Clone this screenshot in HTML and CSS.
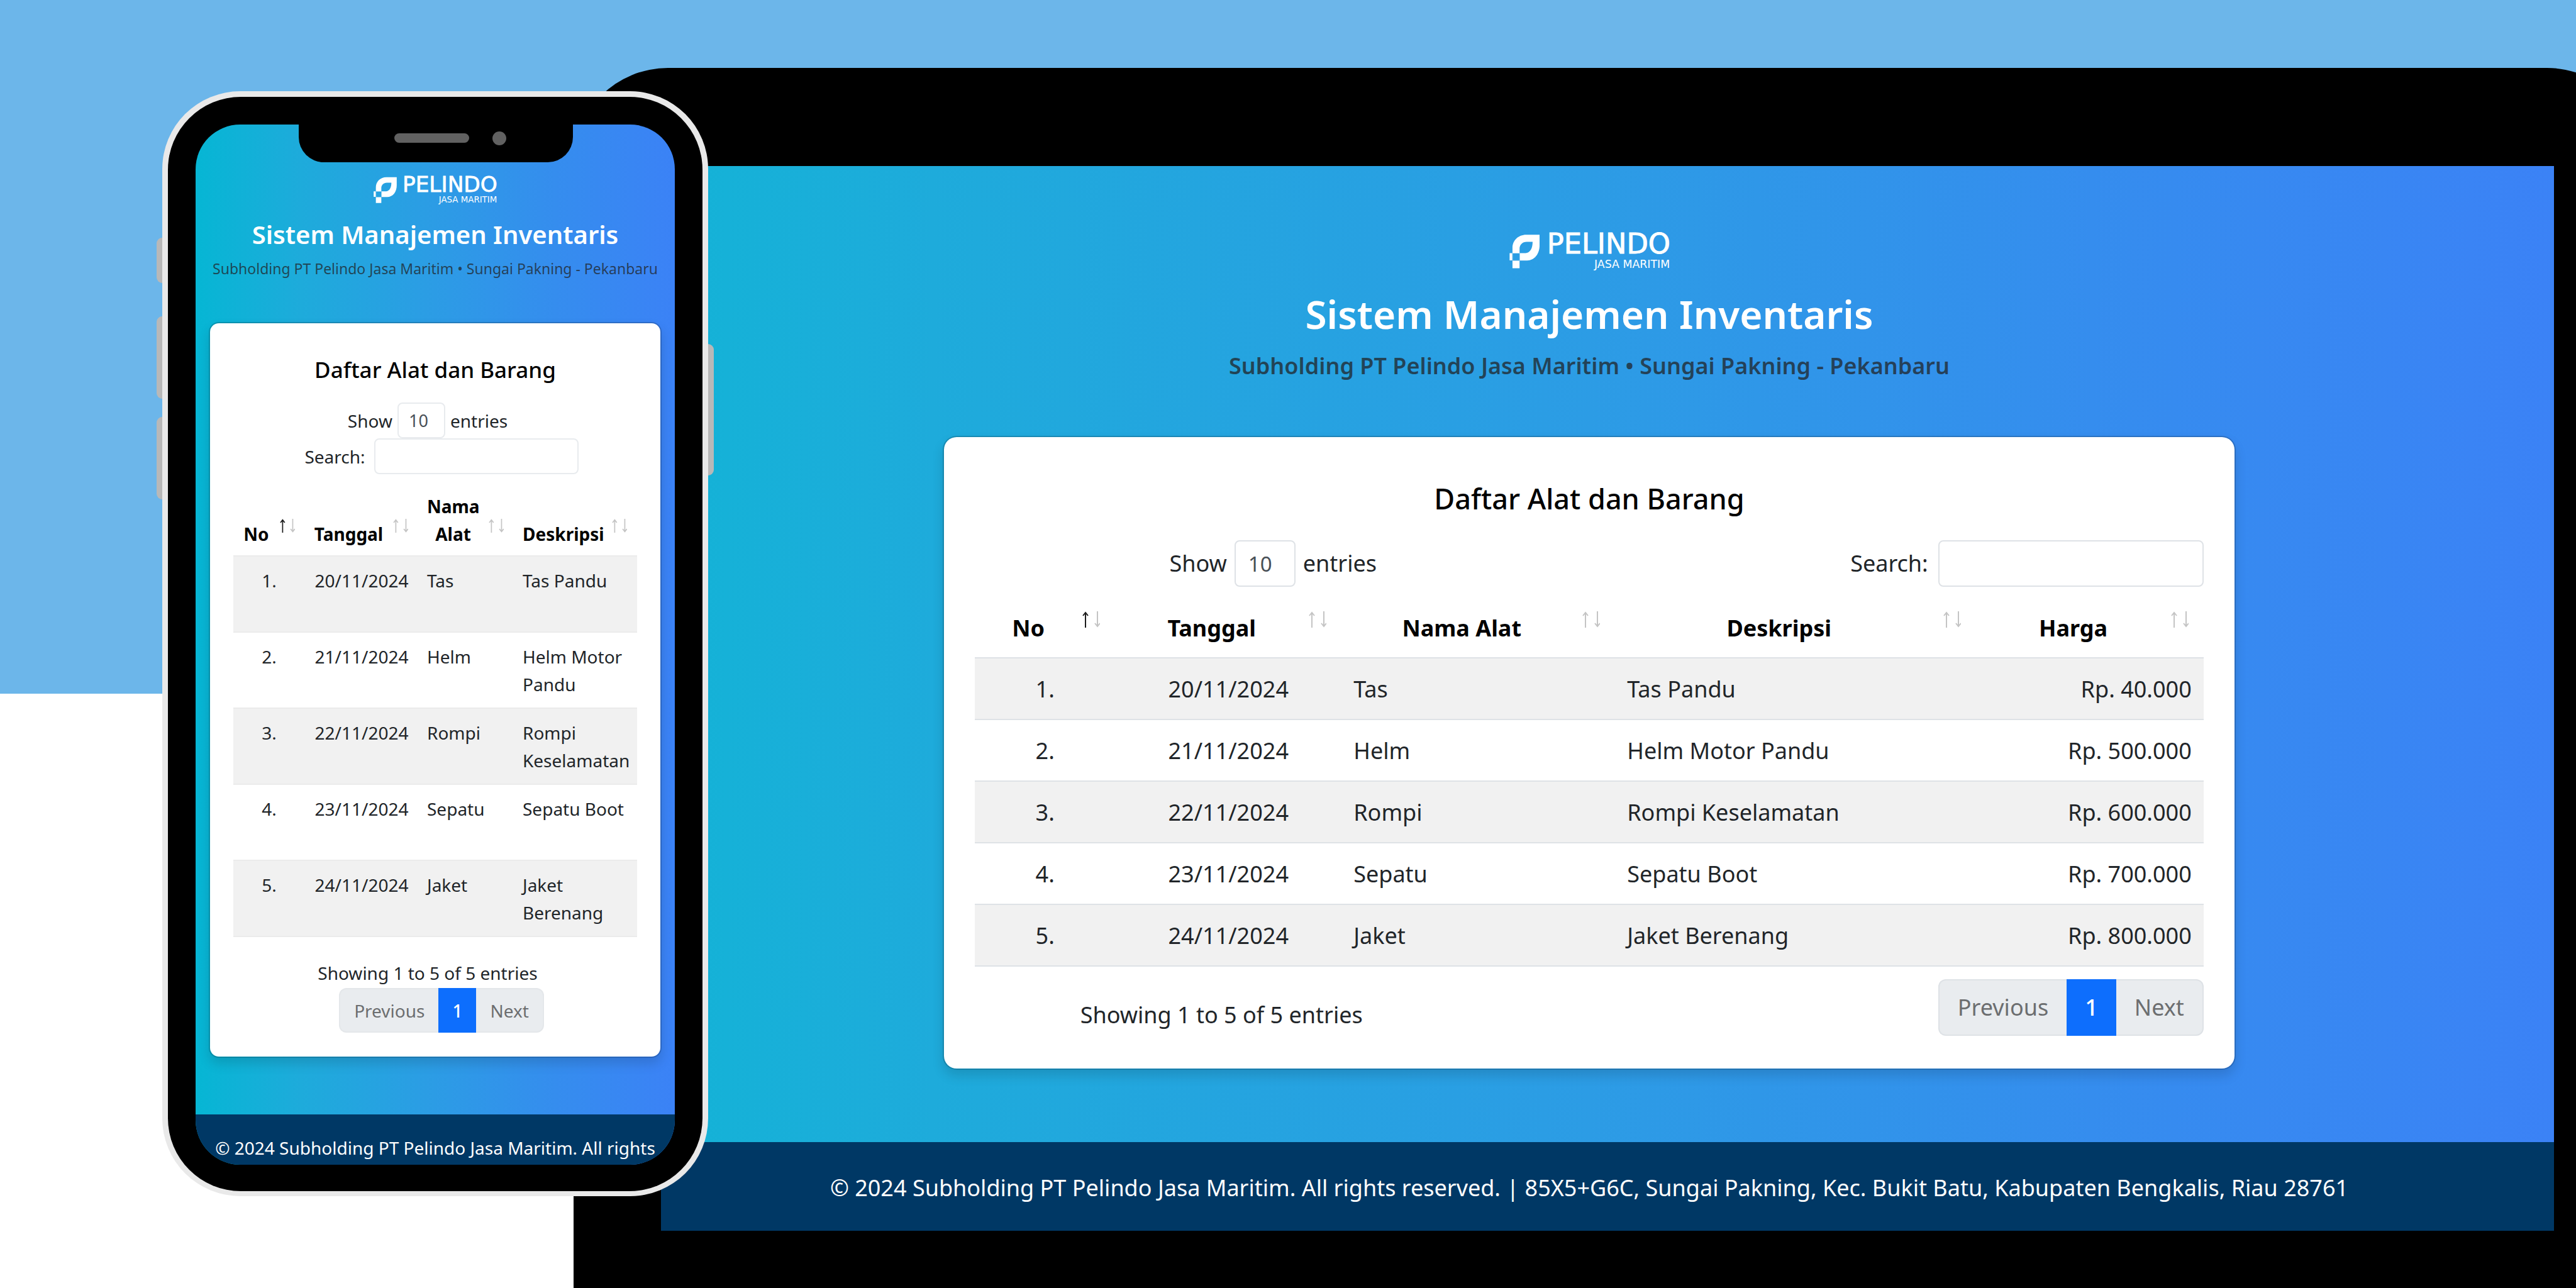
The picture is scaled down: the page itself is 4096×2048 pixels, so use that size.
FILE: index.html
```html
<!DOCTYPE html>
<html lang="id">
<head>
<meta charset="utf-8">
<title>Sistem Manajemen Inventaris</title>
<link rel="stylesheet" href="styles.css">
</head>
<body>
<svg class="defs" aria-hidden="true">
  <symbol id="sort" viewBox="0 0 28 26">
    <g fill="none" stroke-width="2">
      <path class="up" d="M5 26V2M1 7L5 2L9 7"/>
      <path class="down" d="M24 0V24M20 19L24 24L28 19"/>
    </g>
  </symbol>
  <symbol id="sort-asc" viewBox="0 0 28 26">
    <g fill="none" stroke-width="2">
      <path class="up-active" d="M5 26V2M1 7L5 2L9 7"/>
      <path class="down" d="M24 0V24M20 19L24 24L28 19"/>
    </g>
  </symbol>
</svg>
<main class="stage">
  <section class="tablet" aria-label="Tampilan desktop">
    <div class="screen">
      <div class="app app-desktop">
        <header class="masthead">
          <svg class="logo" viewBox="50 50 1300 276" role="img" aria-label="Pelindo Jasa Maritim">
            <path fill="#fff" fill-rule="evenodd" d="M80 200V160C80 100 128 55 190 55H298V140C298 208 258 262 198 262H140V203H185C222 200 242 165 242 112H195C160 112 137 136 137 168V203H80Z"/>
            <path fill="#fff" d="M57 203H78V261H57ZM80 265H137V324H80Z"/>
            <path fill="none" stroke="#fff" stroke-opacity=".45" stroke-width="5" d="M80 203H138V263H80Z"/>
            <text class="logo-name" x="1350" y="207" text-anchor="end">PELINDO</text>
            <text class="logo-unit" x="1346" y="320" text-anchor="end">JASA MARITIM</text>
          </svg>
          <h1 class="title">Sistem Manajemen Inventaris</h1>
          <p class="subtitle">Subholding PT Pelindo Jasa Maritim • Sungai Pakning - Pekanbaru</p>
        </header>
        <div class="card">
          <h2 class="card-title">Daftar Alat dan Barang</h2>
          <div class="controls">
            <label class="length">Show <select class="field select"><option>10</option></select> entries</label>
            <label class="search">Search: <input class="field input" type="search"></label>
          </div>
          <table class="items">
            <colgroup><col class="c-no"><col class="c-date"><col class="c-name"><col class="c-desc"><col class="c-price"></colgroup>
            <thead>
              <tr>
                <th>No<svg class="sort"><use href="#sort-asc"/></svg></th>
                <th>Tanggal<svg class="sort"><use href="#sort"/></svg></th>
                <th>Nama Alat<svg class="sort"><use href="#sort"/></svg></th>
                <th>Deskripsi<svg class="sort"><use href="#sort"/></svg></th>
                <th>Harga<svg class="sort"><use href="#sort"/></svg></th>
              </tr>
            </thead>
            <tbody>
              <tr><td class="mid">1.</td><td class="mid">20/11/2024</td><td>Tas</td><td>Tas Pandu</td><td class="num">Rp. 40.000</td></tr>
              <tr><td class="mid">2.</td><td class="mid">21/11/2024</td><td>Helm</td><td>Helm Motor Pandu</td><td class="num">Rp. 500.000</td></tr>
              <tr><td class="mid">3.</td><td class="mid">22/11/2024</td><td>Rompi</td><td>Rompi Keselamatan</td><td class="num">Rp. 600.000</td></tr>
              <tr><td class="mid">4.</td><td class="mid">23/11/2024</td><td>Sepatu</td><td>Sepatu Boot</td><td class="num">Rp. 700.000</td></tr>
              <tr><td class="mid">5.</td><td class="mid">24/11/2024</td><td>Jaket</td><td>Jaket Berenang</td><td class="num">Rp. 800.000</td></tr>
            </tbody>
          </table>
          <div class="summary">
            <p class="info">Showing 1 to 5 of 5 entries</p>
            <nav class="pages" aria-label="Halaman">
              <button class="page" type="button">Previous</button>
              <button class="page page-active" type="button">1</button>
              <button class="page" type="button">Next</button>
            </nav>
          </div>
        </div>
        <footer class="footer">© 2024 Subholding PT Pelindo Jasa Maritim. All rights reserved. | 85X5+G6C, Sungai Pakning, Kec. Bukit Batu, Kabupaten Bengkalis, Riau 28761</footer>
      </div>
    </div>
  </section>

  <section class="phone" aria-label="Tampilan ponsel">
    <span class="key key-mute"></span>
    <span class="key key-up"></span>
    <span class="key key-down"></span>
    <span class="key key-power"></span>
    <div class="bezel">
      <div class="notch"><span class="speaker"></span><span class="camera"></span></div>
      <div class="app app-mobile">
        <header class="masthead">
          <svg class="logo" viewBox="50 50 1300 276" role="img" aria-label="Pelindo Jasa Maritim">
            <path fill="#fff" fill-rule="evenodd" d="M80 200V160C80 100 128 55 190 55H298V140C298 208 258 262 198 262H140V203H185C222 200 242 165 242 112H195C160 112 137 136 137 168V203H80Z"/>
            <path fill="#fff" d="M57 203H78V261H57ZM80 265H137V324H80Z"/>
            <path fill="none" stroke="#fff" stroke-opacity=".45" stroke-width="5" d="M80 203H138V263H80Z"/>
            <text class="logo-name" x="1350" y="207" text-anchor="end">PELINDO</text>
            <text class="logo-unit" x="1346" y="320" text-anchor="end">JASA MARITIM</text>
          </svg>
          <h1 class="title">Sistem Manajemen Inventaris</h1>
          <p class="subtitle">Subholding PT Pelindo Jasa Maritim • Sungai Pakning - Pekanbaru</p>
        </header>
        <div class="card">
          <h2 class="card-title">Daftar Alat dan Barang</h2>
          <div class="controls">
            <label class="length">Show <select class="field select"><option>10</option></select> entries</label>
            <label class="search">Search: <input class="field input" type="search"></label>
          </div>
          <table class="items">
            <colgroup><col class="c-no"><col class="c-date"><col class="c-name"><col class="c-desc"></colgroup>
            <thead>
              <tr>
                <th>No<svg class="sort"><use href="#sort-asc"/></svg></th>
                <th>Tanggal<svg class="sort"><use href="#sort"/></svg></th>
                <th>Nama Alat<svg class="sort"><use href="#sort"/></svg></th>
                <th>Deskripsi<svg class="sort"><use href="#sort"/></svg></th>
              </tr>
            </thead>
            <tbody>
              <tr><td class="mid">1.</td><td class="mid">20/11/2024</td><td>Tas</td><td>Tas Pandu</td></tr>
              <tr><td class="mid">2.</td><td class="mid">21/11/2024</td><td>Helm</td><td>Helm Motor Pandu</td></tr>
              <tr><td class="mid">3.</td><td class="mid">22/11/2024</td><td>Rompi</td><td>Rompi Keselamatan</td></tr>
              <tr><td class="mid">4.</td><td class="mid">23/11/2024</td><td>Sepatu</td><td>Sepatu Boot</td></tr>
              <tr><td class="mid">5.</td><td class="mid">24/11/2024</td><td>Jaket</td><td>Jaket Berenang</td></tr>
            </tbody>
          </table>
          <div class="summary">
            <p class="info">Showing 1 to 5 of 5 entries</p>
            <nav class="pages" aria-label="Halaman">
              <button class="page" type="button">Previous</button>
              <button class="page page-active" type="button">1</button>
              <button class="page" type="button">Next</button>
            </nav>
          </div>
        </div>
        <footer class="footer">© 2024 Subholding PT Pelindo Jasa Maritim. All rights</footer>
      </div>
    </div>
  </section>
</main>
</body>
</html>
```
FILE: styles.css
```css
* { box-sizing: border-box; }

body {
  margin: 0;
  font-family: "Noto Sans", "Open Sans", sans-serif;
  color: #212529;
}

h1, h2, p { margin: 0; }

.defs { position: absolute; width: 0; height: 0; }

/* Backdrop with the two devices overlapping in shared columns */
.stage {
  display: grid;
  grid-template-columns: 258px 654px 214px 1fr;
  min-height: 100vh;
  overflow: hidden;
  background: linear-gradient(#6cb6ea 1103px, #fff 1103px);
}

.tablet {
  grid-area: 1 / 3 / 2 / 5;
  margin: 108px -104px 0 0;
  padding: 156px 139px 93px;
  border-radius: 150px 150px 0 0;
  background: #000;
}

/* The page runs on a little to the left, under the bezel */
.screen { overflow: hidden; }

.phone {
  grid-area: 1 / 2 / 2 / 4;
  align-self: start;
  position: relative;
  margin-top: 145px;
  padding: 9px 9px 8px;
  border-radius: 124px;
  background: #e9e9e9;
}

.bezel {
  position: relative;
  padding: 44px 44px 42px;
  border-radius: 116px;
  background: #000;
}

.notch {
  position: absolute;
  z-index: 1;
  top: 43px;
  left: 208px;
  display: flex;
  align-items: center;
  gap: 37px;
  width: 436px;
  height: 61px;
  padding: 0 0 16px 152px;
  border-radius: 0 0 40px 40px;
  background: #000;
}

.speaker { width: 119px; height: 15px; border-radius: 8px; background: #616161; }
.camera { width: 22px; height: 22px; border-radius: 50%; background: #616161; }

.key { position: absolute; left: -9px; width: 9px; border-radius: 9px 0 0 9px; background: #b8b8b8; }
.key-mute { top: 233px; height: 72px; }
.key-up { top: 358px; height: 131px; }
.key-down { top: 518px; height: 131px; }
.key-power { top: 402px; left: auto; right: -9px; height: 209px; border-radius: 0 9px 9px 0; }

/* Inventory page */
.app {
  font-size: var(--text);
  line-height: var(--line);
  background: linear-gradient(90deg, #06b6d4, #1eabdb 22%, #2c9ce5 50%, #358dee 75%, #3b82f6);
}

.masthead {
  display: flex;
  flex-direction: column;
  align-items: center;
  text-align: center;
  white-space: nowrap;
}

.logo { overflow: visible; }
.logo-name { font: 400 226px "DejaVu Sans", sans-serif; fill: #fff; stroke: #fff; stroke-width: 5px; }
.logo-unit { font: 400 88px "DejaVu Sans", sans-serif; fill: #fff; }

.title { color: #fff; font-weight: 600; }
.subtitle { color: rgba(33, 37, 41, .75); }

.card {
  border: 2px solid rgba(0, 0, 0, .175);
  background: #fff;
  background-clip: padding-box;
  box-shadow: 0 10px 18px rgba(0, 0, 0, .13);
}

.card-title { color: #000; font-weight: 500; text-align: center; }

.length, .search { display: flex; align-items: center; white-space: nowrap; }

.field {
  appearance: none;
  border: 2px solid #dee2e6;
  border-radius: 8px;
  background: #fff;
  color: #495057;
  font-family: inherit;
}

.items { width: 100%; border-collapse: separate; border-spacing: 0; table-layout: fixed; }

.items th {
  position: relative;
  color: #000;
  font-weight: 700;
  text-align: center;
  vertical-align: bottom;
  border-bottom: 2px solid #dee2e6;
}

.items td { text-align: left; vertical-align: top; border-bottom: 2px solid #dee2e6; }
.items tbody tr:nth-child(odd) { background: #f1f1f1; }
.items .mid { text-align: center; }
.items .num { text-align: right; }

.sort { position: absolute; }
.up, .down { stroke: #c4c4c4; }
.up-active { stroke: #1b1b1b; }

.pages { display: flex; }

.page {
  border: 2px solid #dee2e6;
  border-width: 2px 0;
  background: #e9ecef;
  color: #6c6e70;
  font: inherit;
}

.page:first-child { border-left-width: 2px; border-radius: 12px 0 0 12px; }
.page:last-child { border-right-width: 2px; border-radius: 0 12px 12px 0; }
.page-active { border-color: #0d6efd; background: #0d6efd; color: #fff; font-weight: 500; }

.footer { background: #003865; color: #fff; text-align: center; white-space: nowrap; }

/* Wide layout */
.app-desktop {
  --text: 36px;
  --line: 58px;
  margin-left: -58px;
  padding-top: 108px;
  background: linear-gradient(90deg, #12b4d6, #1eabdb 16%, #2c9ce5 50%, #358dee 76%, #3b82f6);
}
.app-desktop .logo { width: 257px; height: 55px; margin-bottom: 30px; }
.app-desktop .title { font-size: 62px; line-height: 84px; margin-bottom: 14px; }
.app-desktop .subtitle { line-height: 54px; font-weight: 600; }
.app-desktop .card { width: 67%; margin: 84px auto 115px; padding: 68px 49px 52px; border-radius: 22px; }
.app-desktop .card-title { font-size: 45px; line-height: 60px; margin-bottom: 36px; }
.app-desktop .controls { display: grid; grid-template-columns: 948px 1fr; margin-bottom: 19px; }
.app-desktop .length { justify-content: center; gap: 12px; }
.app-desktop .search { justify-content: flex-end; gap: 16px; }
.app-desktop .field { height: 74px; }
.app-desktop .select { width: 97px; padding-left: 20px; font-size: 33px; }
.app-desktop .input { width: 422px; }
.app-desktop .c-no { width: 223px; }
.app-desktop .c-date { width: 360px; }
.app-desktop .c-name { width: 435px; }
.app-desktop .c-desc { width: 574px; }
.app-desktop th { padding: 18px 72px 17px 19px; }
.app-desktop td { padding: 20px 19px 18px; }
.app-desktop .sort { top: 20px; right: 24px; width: 28px; height: 26px; }
.app-desktop .summary { display: flex; justify-content: space-between; padding-top: 20px; }
.app-desktop .info { width: 784px; padding-top: 28px; text-align: center; }
.app-desktop .page { height: 90px; padding: 0 29px; }
.app-desktop .footer { padding: 44px 0 39px; }

/* Narrow layout */
.app-mobile { --text: 28px; --line: 44px; padding-top: 83px; border-radius: 71px; overflow: hidden; }
.app-mobile .logo { width: 198px; height: 42px; margin-bottom: 23px; }
.app-mobile .title { font-size: 40px; line-height: 54px; margin-bottom: 9px; }
.app-mobile .subtitle { font-size: 23px; line-height: 36px; }
.app-mobile .card { margin: 67px 21px 90px; padding: 50px 37px 38px; border-radius: 16px; }
.app-mobile .card-title { font-size: 35px; line-height: 48px; margin-bottom: 28px; }
.app-mobile .controls { display: flex; flex-direction: column; align-items: center; margin-bottom: 16px; }
.app-mobile .length { gap: 8px; padding-right: 24px; }
.app-mobile .search { gap: 14px; padding-left: 20px; }
.app-mobile .field { height: 57px; border-color: #e8ebee; }
.app-mobile .select { width: 76px; padding-left: 16px; font-size: 27px; }
.app-mobile .input { width: 325px; }
.app-mobile .c-no { width: 114px; }
.app-mobile .c-date { width: 180px; }
.app-mobile .c-name { width: 152px; }
.app-mobile th { padding: 13px 55px 12px 14px; }
.app-mobile td { height: 121px; padding: 16px 14px 12px; }
.app-mobile .items th, .app-mobile .items td { border-color: #ebebeb; }
.app-mobile .sort { bottom: 36px; right: 16px; width: 24px; height: 22px; }
.app-mobile .summary { display: flex; flex-direction: column; align-items: center; padding-top: 35px; }
.app-mobile .info { padding-right: 24px; margin-bottom: 2px; }
.app-mobile .pages { padding-left: 20px; }
.app-mobile .page { height: 71px; padding: 0 22px; border-color: #e4e7ea; }
.app-mobile .page-active { border-color: #0d6efd; }
.app-mobile .footer { padding: 31px 0 5px; }
```
